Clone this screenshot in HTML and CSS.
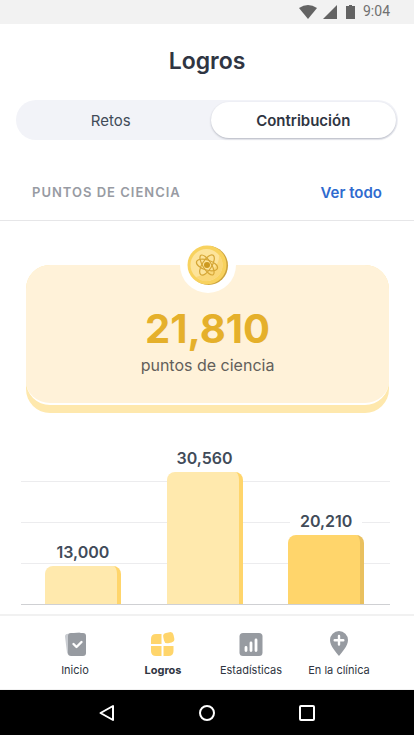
FILE: index.html
```html
<!DOCTYPE html>
<html lang="es">
<head>
    <meta charset="UTF-8">
    <meta name="viewport" content="width=device-width, initial-scale=1.0">
    <title>Logros</title>
    <link rel="stylesheet" href="styles.css">
</head>
<body>
    <div class="status-bar">
        <svg width="18" height="14" viewBox="0 0 18 14"><path d="M0 3Q9-3 18 3L9 14Z" fill="#636363"/></svg>
        <svg width="14" height="14" viewBox="0 0 14 14"><path d="M14 0V14H0Z" fill="#636363"/></svg>
        <svg class="battery" width="9" height="14" viewBox="0 0 9 14"><path d="M0 1H3V0H6V1H9V14H0Z" fill="#636363"/></svg>
        <span>9:04</span>
    </div>

    <main>
        <h1>Logros</h1>

        <div class="tabs">
            <button class="tab">Retos</button>
            <button class="tab active">Contribución</button>
        </div>

        <div class="section-header">
            <h2>PUNTOS DE CIENCIA</h2>
            <a href="#">Ver todo</a>
        </div>

        <div class="card">
            <div class="coin">
                <svg width="42" height="42" viewBox="0 0 42 42">
                    <circle cx="21.5" cy="21.5" r="19.5" fill="#cba23c"/>
                    <circle cx="20" cy="21" r="19.5" fill="#f8d25e"/>
                    <circle cx="19.5" cy="21" r="16" fill="#fde49b"/>
                    <path d="M9 33A16 16 0 0 0 35.500 21A16 16 0 0 0 32 11Q33 27 9 33Z" fill="#fad778"/>
                    <g fill="none" stroke="#d5a636" stroke-width="1.2">
                        <ellipse cx="20" cy="21" rx="11" ry="5" transform="rotate(18 20 21)"/>
                        <ellipse cx="20" cy="21" rx="11.5" ry="4.2" transform="rotate(58 20 21)"/>
                        <ellipse cx="20" cy="21" rx="11.5" ry="4.8" transform="rotate(-58 20 21)"/>
                    </g>
                    <circle cx="20" cy="21" r="3" fill="#cd9920"/>
                </svg>
            </div>
            <div class="card-face">
                <div class="points">21,810</div>
                <div class="points-label">puntos de ciencia</div>
            </div>
        </div>

        <div class="chart">
            <div class="bar-col">
                <span class="bar-value">13,000</span>
                <div class="bar" style="height: 38px"></div>
            </div>
            <div class="bar-col">
                <span class="bar-value">30,560</span>
                <div class="bar" style="height: 132px"></div>
            </div>
            <div class="bar-col">
                <span class="bar-value">20,210</span>
                <div class="bar current" style="height: 69px"></div>
            </div>
        </div>
    </main>

    <nav class="bottom-nav">
        <a href="#">
            <svg width="24" height="26" viewBox="0 0 24 26">
                <path d="M3.500 3L16 1.200Q18 1 18 3V5H7V24Q4.500 24 4 21.500L2 5.500Q1.800 3.500 3.500 3Z" fill="#c9ccd1"/>
                <rect x="5" y="2" width="18" height="23" rx="3" fill="#979ba1"/>
                <path d="M10.500 13L13.500 16L18.500 11" fill="none" stroke="#fff" stroke-width="2.400" stroke-linecap="round" stroke-linejoin="round"/>
            </svg>
            Inicio
        </a>
        <a href="#" class="active">
            <svg width="24" height="26" viewBox="0 0 24 26" fill="#ffd56b">
                <path d="M5 3H10.500V13H0V8Q0 3 5 3Z"/>
                <rect x="12.500" y="1.500" width="10.500" height="10.500" rx="3.500" transform="rotate(-12 17.700 6.700)"/>
                <path d="M0 15H10.500V25H5Q0 25 0 20Z"/>
                <path d="M12.500 15H22.500V20Q22.500 25 17.500 25H12.500Z"/>
            </svg>
            Logros
        </a>
        <a href="#">
            <svg width="24" height="26" viewBox="0 0 24 26">
                <rect x=".5" y="2" width="23" height="23" rx="3.500" fill="#979ba1"/>
                <path d="M7 16.500V19.500M12 12V19.500M17 9V19.500" stroke="#fff" stroke-width="2.800" stroke-linecap="round"/>
            </svg>
            Estadísticas
        </a>
        <a href="#">
            <svg width="24" height="26" viewBox="0 0 24 26">
                <path d="M12 0A9 9 0 0 1 21 9C21 15 15 21 12 25C9 21 3 15 3 9A9 9 0 0 1 12 0Z" fill="#979ba1"/>
                <path d="M12 5V13.500M7.700 9.200H16.300" stroke="#fff" stroke-width="2.400" stroke-linecap="round"/>
            </svg>
            En la clínica
        </a>
    </nav>

    <div class="system-bar">
        <button aria-label="Atrás">
            <svg width="18" height="18" viewBox="0 0 18 18"><path d="M15 2V16L2.500 9Z" fill="none" stroke="#fff" stroke-width="2" stroke-linejoin="round"/></svg>
        </button>
        <button aria-label="Pantalla de inicio">
            <svg width="18" height="18" viewBox="0 0 18 18"><circle cx="9" cy="9" r="7" fill="none" stroke="#fff" stroke-width="2"/></svg>
        </button>
        <button aria-label="Recientes">
            <svg width="18" height="18" viewBox="0 0 18 18"><rect x="2" y="2" width="14" height="14" rx="1" fill="none" stroke="#fff" stroke-width="2"/></svg>
        </button>
    </div>
</body>
</html>
```
FILE: styles.css
```css
* {
    box-sizing: border-box;
}
body {
    margin: 0;
    min-height: 100vh;
    display: flex;
    flex-direction: column;
    font-family: Inter, sans-serif;
    color: #2f3542;
    background-color: #fff;
}
main {
    flex: 1;
}
button {
    border: 0;
    padding: 0;
    background: none;
    font-family: inherit;
    color: inherit;
    cursor: pointer;
}
a {
    text-decoration: none;
}
svg {
    display: block;
}

/* Status bar */
.status-bar {
    height: 24px;
    padding: 0 24px 3px;
    display: flex;
    align-items: center;
    justify-content: flex-end;
    gap: 6px;
    background-color: #f2f2f2;
    font-family: Roboto, sans-serif;
    font-size: 14px;
    color: #707070;
}
.status-bar svg {
    margin-top: 3px;
}
.status-bar .battery {
    margin: 3px 2px 0 3px;
}

/* Header */
h1 {
    margin: 21px 0 23px;
    font-size: 23px;
    line-height: 32px;
    font-weight: 600;
    text-align: center;
}
.tabs {
    display: flex;
    gap: 7px;
    height: 40px;
    margin: 0 16px;
    padding: 2px;
    border-radius: 20px;
    background-color: #f2f3f8;
}
.tab {
    flex: 1;
    border-radius: 18px;
    font-size: 15px;
    color: #414b59;
}
.tab.active {
    background-color: #fff;
    font-weight: 600;
    color: #2f3542;
    box-shadow: 0 1px 2px rgba(40, 45, 70, 0.3);
}
.section-header {
    display: flex;
    justify-content: space-between;
    align-items: center;
    height: 57px;
    margin-top: 24px;
    padding: 0 32px;
    border-bottom: 1px solid #e6e6e8;
}
.section-header h2 {
    margin: 0;
    font-size: 13px;
    font-weight: 600;
    letter-spacing: 1px;
    color: #989ba3;
}
.section-header a {
    font-size: 15px;
    font-weight: 600;
    color: #2f6bcf;
}

/* Points card */
.card {
    position: relative;
    margin: 44px 25px 0 26px;
    padding-bottom: 8px;
    border-radius: 24px;
    background-color: #fee8ad;
}
.card-face {
    height: 140px;
    padding-top: 40px;
    border-bottom: 2px solid #fff;
    border-radius: 24px;
    background-color: #fff2d9;
    text-align: center;
}
.coin {
    position: absolute;
    top: -28px;
    left: 50%;
    width: 56px;
    height: 56px;
    padding: 7px;
    transform: translateX(-50%);
    border-radius: 50%;
    background-color: #fff;
}
.points {
    font-size: 40px;
    line-height: 48px;
    font-weight: 700;
    color: #e5b02b;
}
.points-label {
    font-size: 16px;
    line-height: 24px;
    color: #635f5b;
}

/* Chart */
.chart {
    display: flex;
    align-items: flex-end;
    height: 165px;
    margin: 27px 24px 9px 21px;
    padding: 0 3px 0 1px;
    border-bottom: 1px solid #cfd0d3;
    background: repeating-linear-gradient(to top, transparent 0 40px, #ececee 40px 41px) bottom / 100% 124px no-repeat;
}
.bar-col {
    flex: 1;
    display: flex;
    flex-direction: column;
    align-items: center;
}
.bar-value {
    margin-bottom: 4px;
    padding: 0 10px;
    font-size: 16px;
    line-height: 20px;
    font-weight: 600;
    color: #414b59;
    background-color: #fff;
}
.bar {
    width: 76px;
    border-right: 4px solid #ffd56b;
    border-radius: 8px 8px 0 0;
    background-color: #ffe9ad;
}
.bar.current {
    border-right-color: #e9c05f;
    background-color: #ffd56b;
}

/* Bottom navigation */
.bottom-nav {
    display: flex;
    height: 76px;
    padding: 15px 31px 0;
    border-top: 2px solid #f1f1f1;
    border-bottom: 1px solid #f1f1f1;
}
.bottom-nav a {
    flex: 1;
    display: flex;
    flex-direction: column;
    align-items: center;
    gap: 5px;
    font-size: 11px;
    line-height: 16px;
    white-space: nowrap;
    color: #2f3542;
}
.bottom-nav .active {
    font-weight: 700;
}

/* System buttons */
.system-bar {
    display: flex;
    height: 45px;
    padding: 0 57px;
    background-color: #000;
}
.system-bar button {
    flex: 1;
    display: flex;
    align-items: center;
    justify-content: center;
}
```
